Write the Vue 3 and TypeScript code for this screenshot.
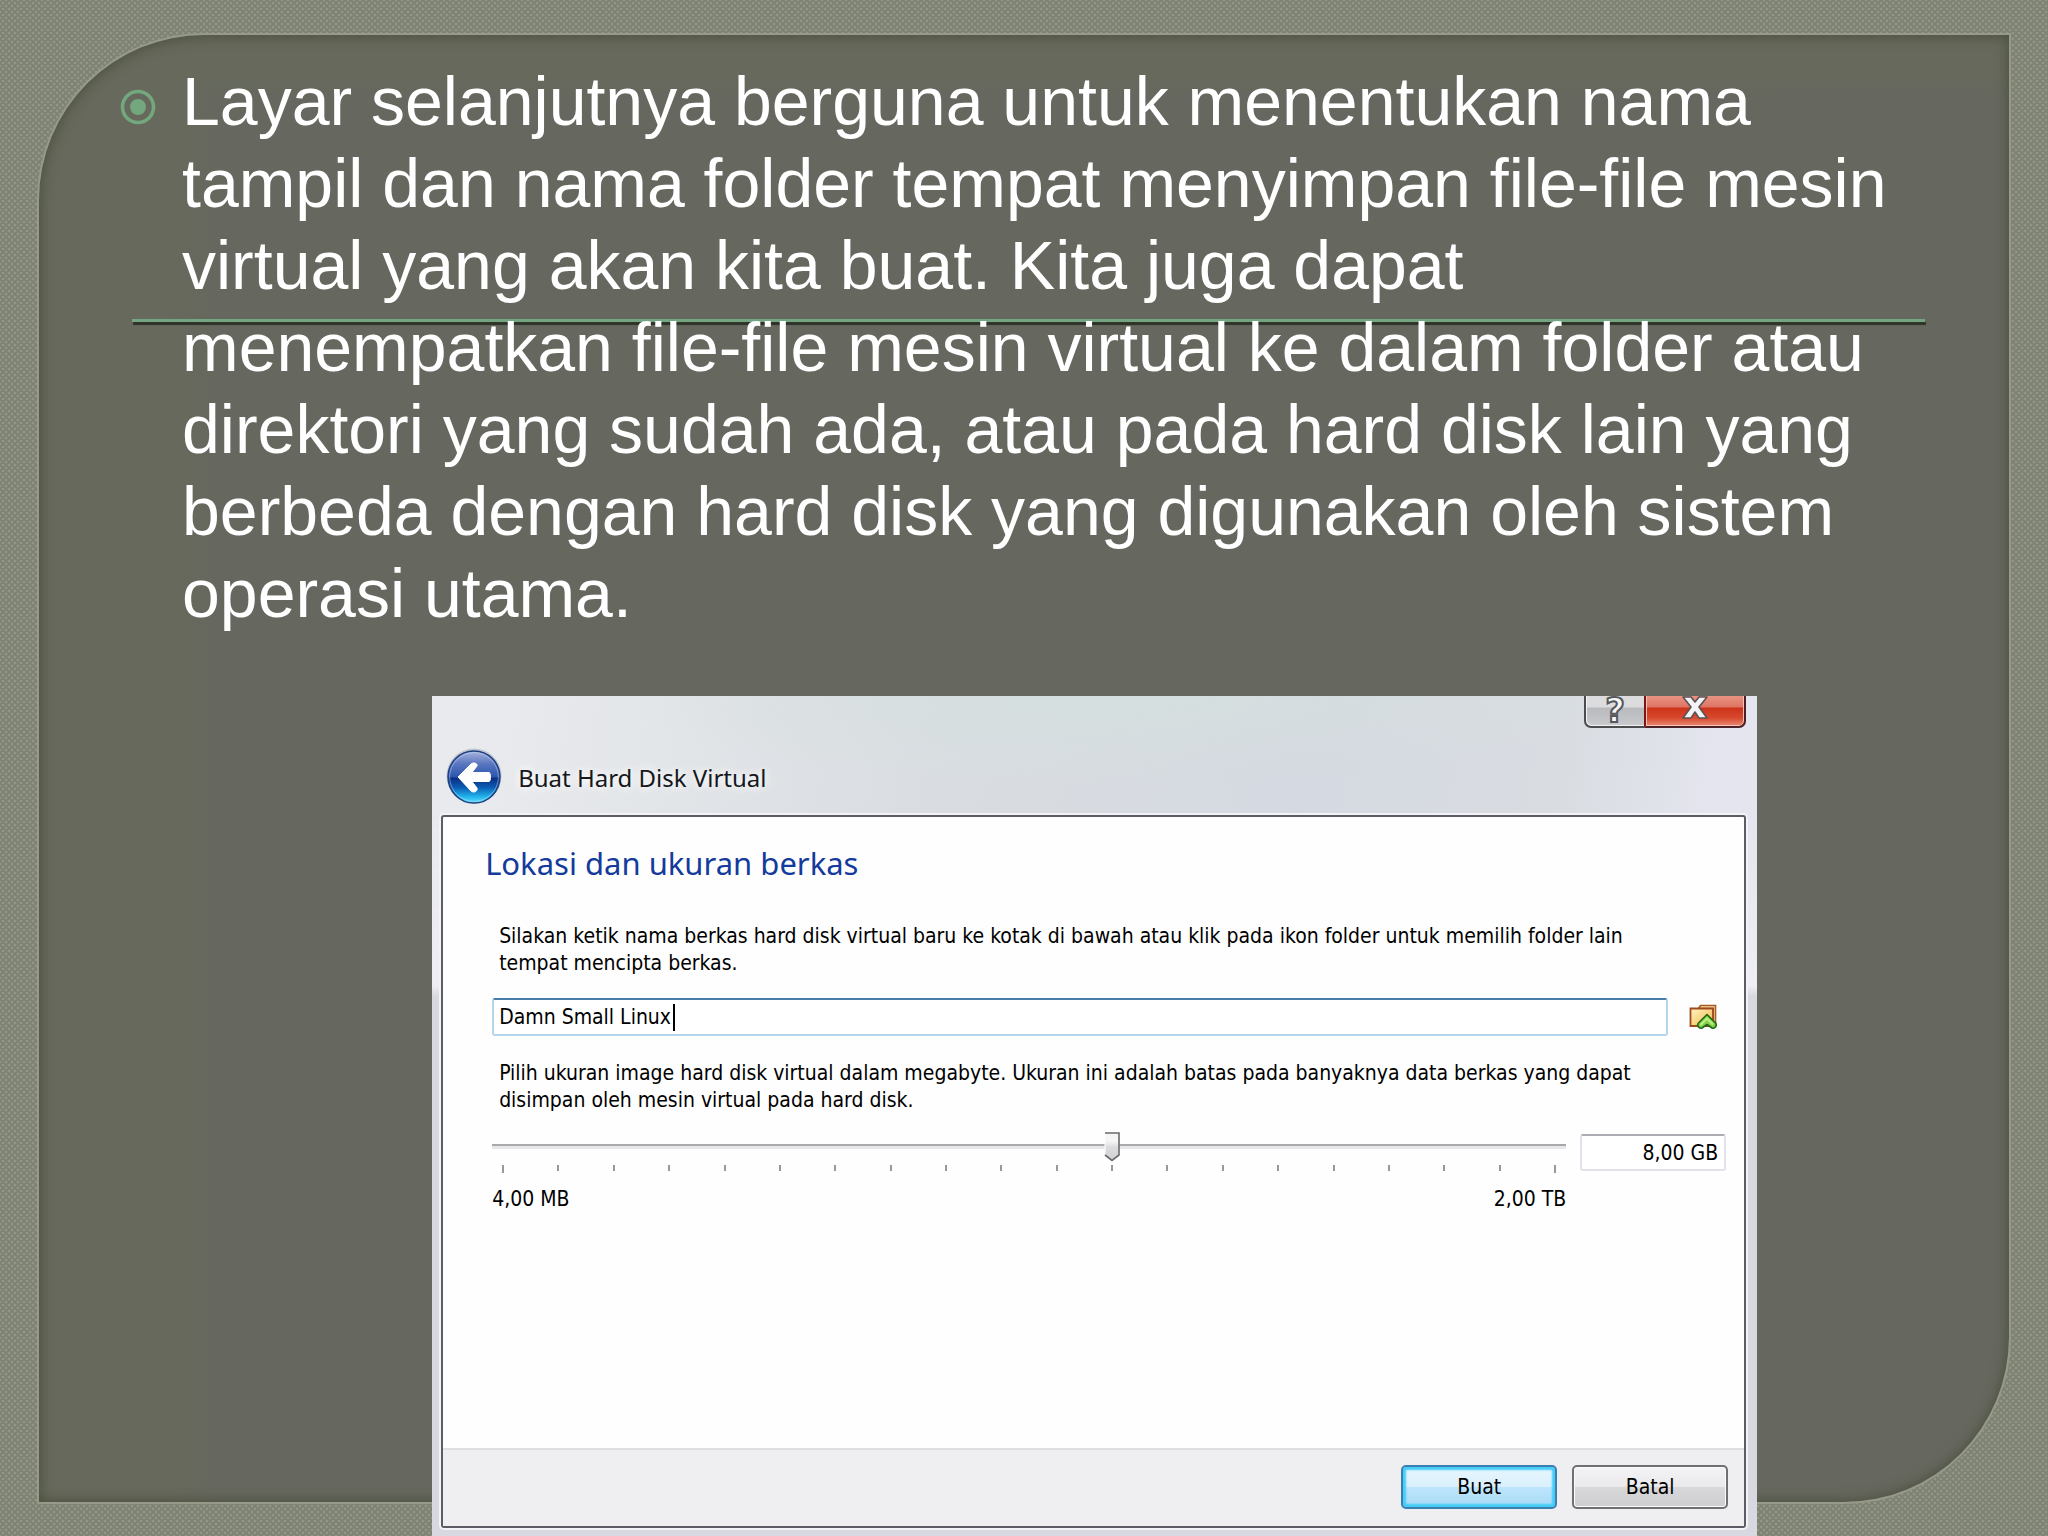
<script setup lang="ts">
import { ref } from 'vue'

const slideText =
  'Layar selanjutnya berguna untuk menentukan nama tampil dan nama folder tempat menyimpan file-file mesin virtual yang akan kita buat. Kita juga dapat menempatkan file-file mesin virtual ke dalam folder atau direktori yang sudah ada, atau pada hard disk lain yang berbeda dengan hard disk yang digunakan oleh sistem operasi utama.'

const fileName = ref('Damn Small Linux')
const sizeStep = ref(11)
const sizeText = ref('8,00 GB')
const tickCount = 20
</script>

<template>
  <main class="slide">
    <div class="panel"></div>
    <div class="content">
      <div class="rule"></div>
      <ul class="bullets">
        <li>
          <svg class="bullet" viewBox="0 0 36 36" aria-hidden="true">
            <circle cx="18" cy="18" r="15.5" fill="none" stroke="#73a77e" stroke-width="3.6" />
            <circle cx="18" cy="18" r="8" fill="#73a77e" />
          </svg>
          <p>{{ slideText }}</p>
        </li>
      </ul>

      <section class="dialog" aria-labelledby="dialog-title">
        <div class="caption">
          <button class="cap help" type="button" aria-label="Bantuan"><span>?</span></button>
          <button class="cap close" type="button" aria-label="Tutup">
            <svg viewBox="0 0 26 24" aria-hidden="true">
              <path
                d="M1 1h8l4 5 4-5h8l-8 10 8 11h-8l-4-6-4 6H1l8-11z"
                fill="#f4f4f4"
                stroke="#5b5257"
                stroke-width="1.6"
                stroke-linejoin="round"
              />
            </svg>
          </button>
        </div>

        <header class="title-row">
          <button class="back" type="button" aria-label="Kembali">
            <svg viewBox="0 0 56 56" aria-hidden="true">
              <defs>
                <linearGradient id="orb" x1="0" y1="0" x2="0" y2="1">
                  <stop offset="0" stop-color="#a9b4dc" />
                  <stop offset="0.25" stop-color="#5a76c0" />
                  <stop offset="0.5" stop-color="#2a55ae" />
                  <stop offset="0.52" stop-color="#0b2c80" />
                  <stop offset="0.7" stop-color="#0a5cb2" />
                  <stop offset="0.88" stop-color="#22b4ec" />
                  <stop offset="1" stop-color="#58e0fa" />
                </linearGradient>
              </defs>
              <circle cx="28" cy="28" r="27.5" fill="#c3c8cc" />
              <circle cx="28" cy="29" r="26" fill="url(#orb)" stroke="#1d3f82" stroke-width="1.4" />
              <circle cx="28" cy="29" r="24.4" fill="none" stroke="#c5d8f4" stroke-opacity="0.5" />
              <path
                d="M12 29 25 16c2-2 7-1 6 2l-5 6.500h17c2 0 2 9 0 9H26l5 6.500c1 4-4 5-6 3z"
                fill="#fff"
                stroke="#fff"
                stroke-linejoin="round"
              />
            </svg>
          </button>
          <h1 id="dialog-title">Buat Hard Disk Virtual</h1>
        </header>

        <form class="frame" @submit.prevent>
          <div class="body">
            <h2>Lokasi dan ukuran berkas</h2>

            <label class="note" for="file-name">
              Silakan ketik nama berkas hard disk virtual baru ke kotak di bawah atau klik pada ikon folder untuk memilih folder lain tempat mencipta berkas.
            </label>
            <div class="file-row">
              <div class="field">
                <input id="file-name" v-model="fileName" type="text" size="16" /><i class="caret"></i>
              </div>
              <button class="folder" type="button" aria-label="Pilih folder">
                <svg viewBox="0 0 28 26" aria-hidden="true">
                  <defs>
                    <linearGradient id="fold" x1="0" y1="0" x2="1" y2="1">
                      <stop offset="0" stop-color="#fff6c4" />
                      <stop offset="1" stop-color="#f6b544" />
                    </linearGradient>
                  </defs>
                  <path d="M9.500 4.500 11.500 1.500h15V20H24V4.500z" fill="#fbe0a0" stroke="#a85a24" stroke-width="1.600" />
                  <path d="M1.500 4.500H24V22H1.500z" fill="url(#fold)" stroke="#9c4a20" stroke-width="1.800" />
                  <path
                    d="M18 10.500 26.500 19c2 2.500-.5 6-3.500 5l-5-3.500L13 24c-3 1-5.500-2.500-3.500-5z"
                    fill="#86d24a"
                    stroke="#1f6a17"
                    stroke-width="1.600"
                    stroke-linejoin="round"
                  />
                  <path d="m11.500 21 6.500-6.500 6 6" fill="none" stroke="#baf08a" stroke-width="2" />
                </svg>
              </button>
            </div>

            <label class="note" for="disk-size">
              Pilih ukuran image hard disk virtual dalam megabyte. Ukuran ini adalah batas pada banyaknya data berkas yang dapat disimpan oleh mesin virtual pada hard disk.
            </label>
            <div class="size-row">
              <div class="scale">
                <input id="disk-size" v-model.number="sizeStep" type="range" min="0" :max="tickCount - 1" />
                <div class="ticks"><i v-for="n in tickCount" :key="n"></i></div>
                <div class="ends"><span>4,00 MB</span><span>2,00 TB</span></div>
              </div>
              <input v-model="sizeText" class="size" type="text" aria-label="Ukuran" />
            </div>
          </div>

          <footer>
            <button class="btn primary" type="submit">Buat</button>
            <button class="btn" type="button">Batal</button>
          </footer>
        </form>
      </section>
    </div>
  </main>
</template>

<style>
body {
  background: #7f8373;
}
</style>

<style scoped>
* {
  box-sizing: border-box;
}
.slide {
  display: grid;
  min-height: 100vh;
  background-color: #7d8172;
  background-image: radial-gradient(circle, #9ca090 0, rgba(156, 160, 144, 0) 2px),
    radial-gradient(circle, #9ca090 0, rgba(156, 160, 144, 0) 2px);
  background-size: 6px 6px;
  background-position: 0 0, 3px 3px;
}
.panel {
  grid-area: 1 / 1;
  margin: 35px 39px 34px;
  border-radius: 165px 0 165px 0;
  background: linear-gradient(90deg, #66695b 130px, rgba(102, 105, 91, 0) 180px),
    linear-gradient(#66695b 35px, rgba(102, 105, 91, 0) 60px), #66685f;
  box-shadow: 0 0 0 2px #969a89, inset 0 0 14px 0 #474b38;
}
.content {
  grid-area: 1 / 1;
  position: relative;
  display: flex;
  flex-direction: column;
}
.rule {
  position: absolute;
  top: 319px;
  left: 132px;
  right: 123px;
  height: 3px;
  background: #73a583;
  box-shadow: 1px 3px 1px #2e3226;
}
.bullets {
  position: relative;
  list-style: none;
  margin: 0;
  padding: 60px 144px 0 120px;
  color: #fff;
  font: 68px/82px 'Liberation Sans', Arial, sans-serif;
}
.bullets li {
  display: flex;
  align-items: flex-start;
  gap: 26px;
}
.bullet {
  flex: none;
  width: 36px;
  height: 36px;
  margin-top: 29px;
}
.bullets p {
  margin: 0;
}
.dialog {
  display: flex;
  flex: 1;
  flex-direction: column;
  width: 64.7%;
  margin: 62px 0 0 21.1%;
  padding: 0 11px 8px 9px;
  color: #000;
  font: 21px/27px 'DejaVu Sans Condensed', 'DejaVu Sans', Tahoma, sans-serif;
  background: linear-gradient(transparent 120px, #eeeef4 290px, #d8d9e0 300px),
    radial-gradient(ellipse 500px 90px at 52% 0, #d5dfdf, rgba(213, 223, 223, 0)),
    linear-gradient(100deg, #e8eaed 5%, #d9dde1 35%, #d5d9e1 60%, #d9dde2 78%, #e4e5ee 88%);
}
.caption {
  display: flex;
  justify-content: flex-end;
}
.cap {
  display: flex;
  justify-content: center;
  height: 32px;
  padding: 0;
  border: 2px solid #4a4c50;
  border-top: 0;
}
.help {
  width: 60px;
  border-right: 0;
  border-radius: 0 0 0 7px;
  background: linear-gradient(#dcdcde 11px, #b9babd 12px, #c9cacd);
  box-shadow: inset 1px -1px 0 #f2f2f4;
}
.help span {
  color: #f6f6f6;
  font: bold 34px/28px 'DejaVu Sans', sans-serif;
  -webkit-text-stroke: 2px #56585c;
}
.close {
  width: 102px;
  border-color: #4d2226;
  border-left-color: #7c1616;
  border-radius: 0 0 7px 0;
  background: linear-gradient(#e89482, #de7463 11px, #cd3319 12px, #d8492e 22px, #e88a72);
  box-shadow: inset 1px -1px 0 #f7c1b6, inset -1px 0 0 #f7c1b6;
}
.close svg {
  width: 26px;
  height: 24px;
}
.title-row {
  display: flex;
  align-items: center;
  gap: 16px;
  height: 87px;
  padding: 9px 0 0 5px;
}
.back {
  width: 56px;
  height: 56px;
  padding: 0;
  border: 0;
  border-radius: 50%;
  background: none;
}
.back svg {
  display: block;
}
h1 {
  margin: 0;
  padding-top: 3px;
  color: #16181c;
  font: 24px/32px 'Noto Sans', 'Open Sans', sans-serif;
  text-shadow: 0 0 12px #fff, 0 0 8px #fff;
}
.frame {
  display: flex;
  flex: 1;
  flex-direction: column;
  border: 2px solid #5c5d64;
  border-radius: 3px;
  background: #fefefe;
  box-shadow: 0 0 0 2px #f3f3f7;
}
.body {
  display: flex;
  flex: 1;
  flex-direction: column;
  padding: 26px 18px 0 49px;
}
h2 {
  margin: 0 0 40px -7px;
  color: #133a9c;
  font: 31px/40px 'Noto Sans', 'Open Sans', sans-serif;
}
.note {
  padding: 0 60px 0 7px;
}
.file-row {
  display: flex;
  align-items: center;
  margin: 21px 0 24px;
}
.field {
  display: flex;
  flex: 1;
  align-items: center;
  height: 38px;
  padding: 1px 5px 0;
  border: 2px solid #b5d5ec;
  border-top-color: #477ea8;
  border-radius: 3px;
  background: #fff;
}
.field input {
  width: 176px;
  padding: 0;
  border: 0;
  outline: 0;
  background: none;
  font: inherit;
  color: inherit;
}
.caret {
  width: 2px;
  height: 27px;
  margin-left: -2px;
  background: #000;
}
.folder {
  width: 58px;
  height: 26px;
  padding: 0 0 0 11px;
  border: 0;
  background: none;
}
.folder svg {
  display: block;
  width: 28px;
  height: 26px;
  margin: auto;
}
.size-row {
  display: flex;
  align-items: flex-start;
  gap: 14px;
  margin-top: 18px;
}
.scale {
  flex: 1;
}
.scale input {
  display: block;
  width: 100%;
  height: 30px;
  margin: 0;
  appearance: none;
  background: none;
}
.scale input::-webkit-slider-runnable-track {
  height: 30px;
  background: linear-gradient(#a9a9ab 2px, #e7e7e9 2px) 0 12px / 100% 5px no-repeat;
}
.scale input::-webkit-slider-thumb {
  appearance: none;
  width: 22px;
  height: 30px;
  background: url("data:image/svg+xml,%3Csvg xmlns='http://www.w3.org/2000/svg' viewBox='0 0 22 30'%3E%3Cdefs%3E%3ClinearGradient id='g' x2='0' y2='1'%3E%3Cstop offset='.3' stop-color='%23f5f5f6'/%3E%3Cstop offset='.5' stop-color='%23dcdcdf'/%3E%3Cstop offset='1' stop-color='%23d0d0d4'/%3E%3C/linearGradient%3E%3C/defs%3E%3Cpath d='M4 1h14v22l-7 6-7-6z' fill='url(%23g)' stroke='%23fff'/%3E%3Cpath d='M4 1h14v22l-7 5.500-7-5.500' fill='none' stroke='%23696a6e' stroke-width='1.600'/%3E%3C/svg%3E");
}
.ticks {
  display: flex;
  justify-content: space-between;
  height: 8px;
  margin-top: 3px;
  padding: 0 10px;
}
.ticks i {
  width: 2px;
  height: 6px;
  background: #98989c;
}
.ticks i:first-child,
.ticks i:last-child {
  height: 8px;
}
.ends {
  display: flex;
  justify-content: space-between;
  margin-top: 13px;
}
.size {
  width: 146px;
  height: 37px;
  margin-top: 2px;
  padding: 0 6px;
  border: 2px solid #e2e3ea;
  border-top-color: #abadb3;
  border-radius: 3px;
  background: #fff;
  color: inherit;
  font: inherit;
  text-align: right;
}
footer {
  display: flex;
  justify-content: flex-end;
  gap: 15px;
  padding: 15px 16px 17px;
  border-top: 2px solid #dfdfe1;
  background: #efeef1;
}
.btn {
  width: 156px;
  height: 44px;
  padding: 0;
  border: 2px solid #707074;
  border-radius: 5px;
  background: linear-gradient(#f3f2f4, #e9e8ea 50%, #d8d7d9 50%, #cfcecf);
  box-shadow: inset 0 0 0 1px #fbfbfb;
  color: inherit;
  font: inherit;
}
.primary {
  border-color: #3c7fb1;
  background: linear-gradient(#e9f6fd, #d9f0fc 50%, #bee6fd 50%, #a9daf5);
  box-shadow: inset 0 0 2px 3px #43cdf8;
}
</style>
